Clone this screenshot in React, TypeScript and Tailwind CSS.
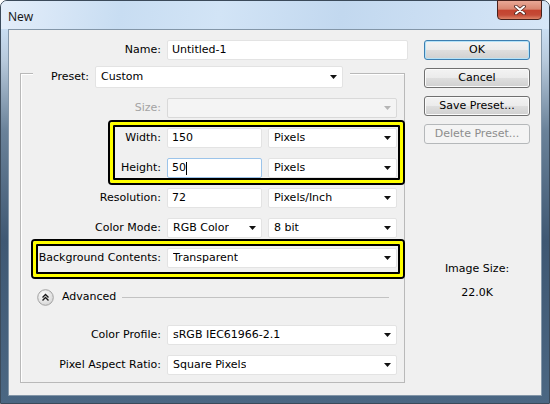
import React from "react";

const font = { fontFamily: '"DejaVu Sans", Verdana, sans-serif' };

function Arrow({ disabled }: { disabled?: boolean }) {
  return (
    <svg width="7" height="4" viewBox="0 0 7 4" className="shrink-0">
      <polygon points="0,0 7,0 3.5,4" fill={disabled ? "#b5b5b5" : "#111"} />
    </svg>
  );
}

function Combo({ w, h = 20, value, disabled }: { w: string; h?: number; value?: string; disabled?: boolean }) {
  return (
    <div
      className={`${w} ${h === 22 ? "h-[22px]" : "h-[20px]"} flex items-center justify-between pl-[5px] pr-[5px] rounded-[2px] border ${
        disabled ? "bg-[#f4f4f4] border-[#d9d9d9]" : "bg-white border-[#e3e3e3]"
      }`}
    >
      <span className="truncate">{value}</span>
      <Arrow disabled={disabled} />
    </div>
  );
}

function Input({ w, value, focused }: { w: string; value: string; focused?: boolean }) {
  return (
    <div
      className={`${w} h-[20px] flex items-center pl-[4px] bg-white rounded-[2px] border ${
        focused ? "border-[#9cc4ea]" : "border-[#e3e3e3]"
      }`}
    >
      <span>{value}</span>
      {focused && <span className="w-px h-[13px] bg-black" />}
    </div>
  );
}

function Row({ label, children, className = "", dim }: { label: string; children: React.ReactNode; className?: string; dim?: boolean }) {
  return (
    <div className={`flex items-center h-[20px] ${className}`}>
      <div className={`w-[140px] text-right ${dim ? "text-[#a3a3a3]" : ""}`}>{label}</div>
      <div className="ml-[6px] flex gap-[6px]">{children}</div>
    </div>
  );
}

function Button({ label, kind }: { label: string; kind?: "default" | "disabled" }) {
  const base = "w-[106px] h-[20px] flex items-center justify-center rounded-[3px] border";
  if (kind === "disabled")
    return <div className={`${base} border-[#b5b8ba] bg-[#f4f4f4] text-[#8d8d8d]`}>{label}</div>;
  return (
    <div
      className={`${base} ${
        kind === "default"
          ? "border-[#3c7fb1] shadow-[inset_0_0_0_1px_#b4e2f8]"
          : "border-[#707070] shadow-[inset_0_0_0_1px_#fbfbfb]"
      } bg-[linear-gradient(180deg,#f3f3f3_0%,#ebebeb_50%,#dedede_50%,#d0d0d0_100%)]`}
    >
      {label}
    </div>
  );
}

function Highlight({ className }: { className: string }) {
  return (
    <div className={`absolute pointer-events-none border-2 border-black rounded-[4px] ${className}`}>
      <div className="h-full border-[3px] border-[#ffff00] rounded-[2px]">
        <div className="h-full border-2 border-black rounded-[1px]" />
      </div>
    </div>
  );
}

export default function App() {
  return (
    <div
      className="w-[550px] h-[404px] flex flex-col rounded-t-[7px] border border-[#3b4a5a] px-[7px] pb-[7px] bg-[linear-gradient(180deg,#dce9f7_0px,#cadef2_28px,#b7c9db_60px,#6a8299_130px,#3f5873_240px,#4b6783_100%)] text-[11px] text-black"
      style={font}
    >
      {/* title bar */}
      <div className="h-[28px] flex items-start justify-between -mx-[7px] px-[7px] rounded-t-[6px] bg-[linear-gradient(100deg,#e4eefa_0%,#c8ddf2_22%,#d2e4f6_40%,#c2d8ef_62%,#d6e6f7_100%)]">
        <span className="mt-[7px] text-[12px] text-[#1b1b1b]" style={{ fontFamily: '"Noto Sans", sans-serif' }}>
          New
        </span>
        <div className="w-[45px] h-[20px] -mt-px flex items-center justify-center rounded-b-[4px] border border-[#47211c] bg-[linear-gradient(180deg,#e9a896_0%,#d98670_45%,#c4432f_52%,#c44b37_78%,#dd8468_100%)]">
          <svg width="12" height="10" viewBox="0 0 12 10">
            <path d="M2 1.5 L10 8.5 M10 1.5 L2 8.5" stroke="#4a231e" strokeWidth="3.6" strokeLinecap="round" />
            <path d="M2 1.5 L10 8.5 M10 1.5 L2 8.5" stroke="#ffffff" strokeWidth="2" strokeLinecap="round" />
          </svg>
        </div>
      </div>

      {/* client area */}
      <div className="flex-1 flex border border-[#8396a8] bg-[#f0f0f0] pt-[10px] pl-[11px] pr-[11px]">
        <div className="w-[388px] flex flex-col">
          <div className="flex items-center h-[20px]">
            <div className="w-[141px] text-right">Name:</div>
            <div className="ml-[6px]">
              <Input w="w-[241px]" value="Untitled-1" />
            </div>
          </div>

          <div className="relative mt-[13px] w-[385px] border border-[#b9b9b9] shadow-[inset_1px_1px_0_#ffffff] flex flex-col pb-[7px]">
            <div className="-mt-[8px] ml-[12px] self-start flex items-center bg-[#f0f0f0] pr-[7px]">
              <div className="w-[56px] text-right">Preset:</div>
              <div className="ml-[6px]">
                <Combo w="w-[248px]" h={22} value="Custom" />
              </div>
            </div>

            <Row label="Size:" dim className="mt-[10px]">
              <Combo w="w-[230px]" disabled />
            </Row>
            <Row label="Width:" className="mt-[10px]">
              <Input w="w-[95px]" value="150" />
              <Combo w="w-[129px]" value="Pixels" />
            </Row>
            <Row label="Height:" className="mt-[10px]">
              <Input w="w-[95px]" value="50" focused />
              <Combo w="w-[129px]" value="Pixels" />
            </Row>
            <Row label="Resolution:" className="mt-[10px]">
              <Input w="w-[95px]" value="72" />
              <Combo w="w-[129px]" value="Pixels/Inch" />
            </Row>
            <Row label="Color Mode:" className="mt-[10px]">
              <Combo w="w-[95px]" value="RGB Color" />
              <Combo w="w-[129px]" value="8 bit" />
            </Row>
            <Row label="Background Contents:" className="mt-[10px]">
              <Combo w="w-[230px]" value="Transparent" />
            </Row>

            <div className="mt-[19px] h-[20px] flex items-center pl-[16px] pr-[15px]">
              <svg width="17" height="17" viewBox="0 0 17 17" className="shrink-0">
                <defs>
                  <radialGradient id="adv" cx="40%" cy="35%" r="70%">
                    <stop offset="0%" stopColor="#ffffff" />
                    <stop offset="100%" stopColor="#d4d4d4" />
                  </radialGradient>
                </defs>
                <circle cx="8.5" cy="8.5" r="7.8" fill="url(#adv)" stroke="#a2a2a2" />
                <polyline points="5.5,8.5 8.5,5.5 11.5,8.5" fill="none" stroke="#1a1a1a" strokeWidth="1.4" />
                <polyline points="5.5,11.5 8.5,8.5 11.5,11.5" fill="none" stroke="#1a1a1a" strokeWidth="1.4" />
              </svg>
              <span className="ml-[8px]">Advanced</span>
              <div className="ml-[6px] flex-1 h-px bg-[#c2c2c2]" />
            </div>

            <Row label="Color Profile:" className="mt-[18px]">
              <Combo w="w-[230px]" value="sRGB IEC61966-2.1" />
            </Row>
            <Row label="Pixel Aspect Ratio:" className="mt-[10px]">
              <Combo w="w-[230px]" value="Square Pixels" />
            </Row>

            <Highlight className="left-[87px] top-[46px] w-[297px] h-[65px]" />
            <Highlight className="left-[10px] top-[165px] w-[374px] h-[40px]" />
          </div>
        </div>

        <div className="ml-[16px] w-[106px] flex flex-col">
          <div className="flex flex-col gap-[8px]">
            <Button label="OK" kind="default" />
            <Button label="Cancel" />
            <Button label="Save Preset..." />
            <Button label="Delete Preset..." kind="disabled" />
          </div>
          <div className="mt-[118px] text-center leading-[13px]">Image Size:</div>
          <div className="mt-[11px] text-center leading-[13px]">22.0K</div>
        </div>
      </div>
    </div>
  );
}
